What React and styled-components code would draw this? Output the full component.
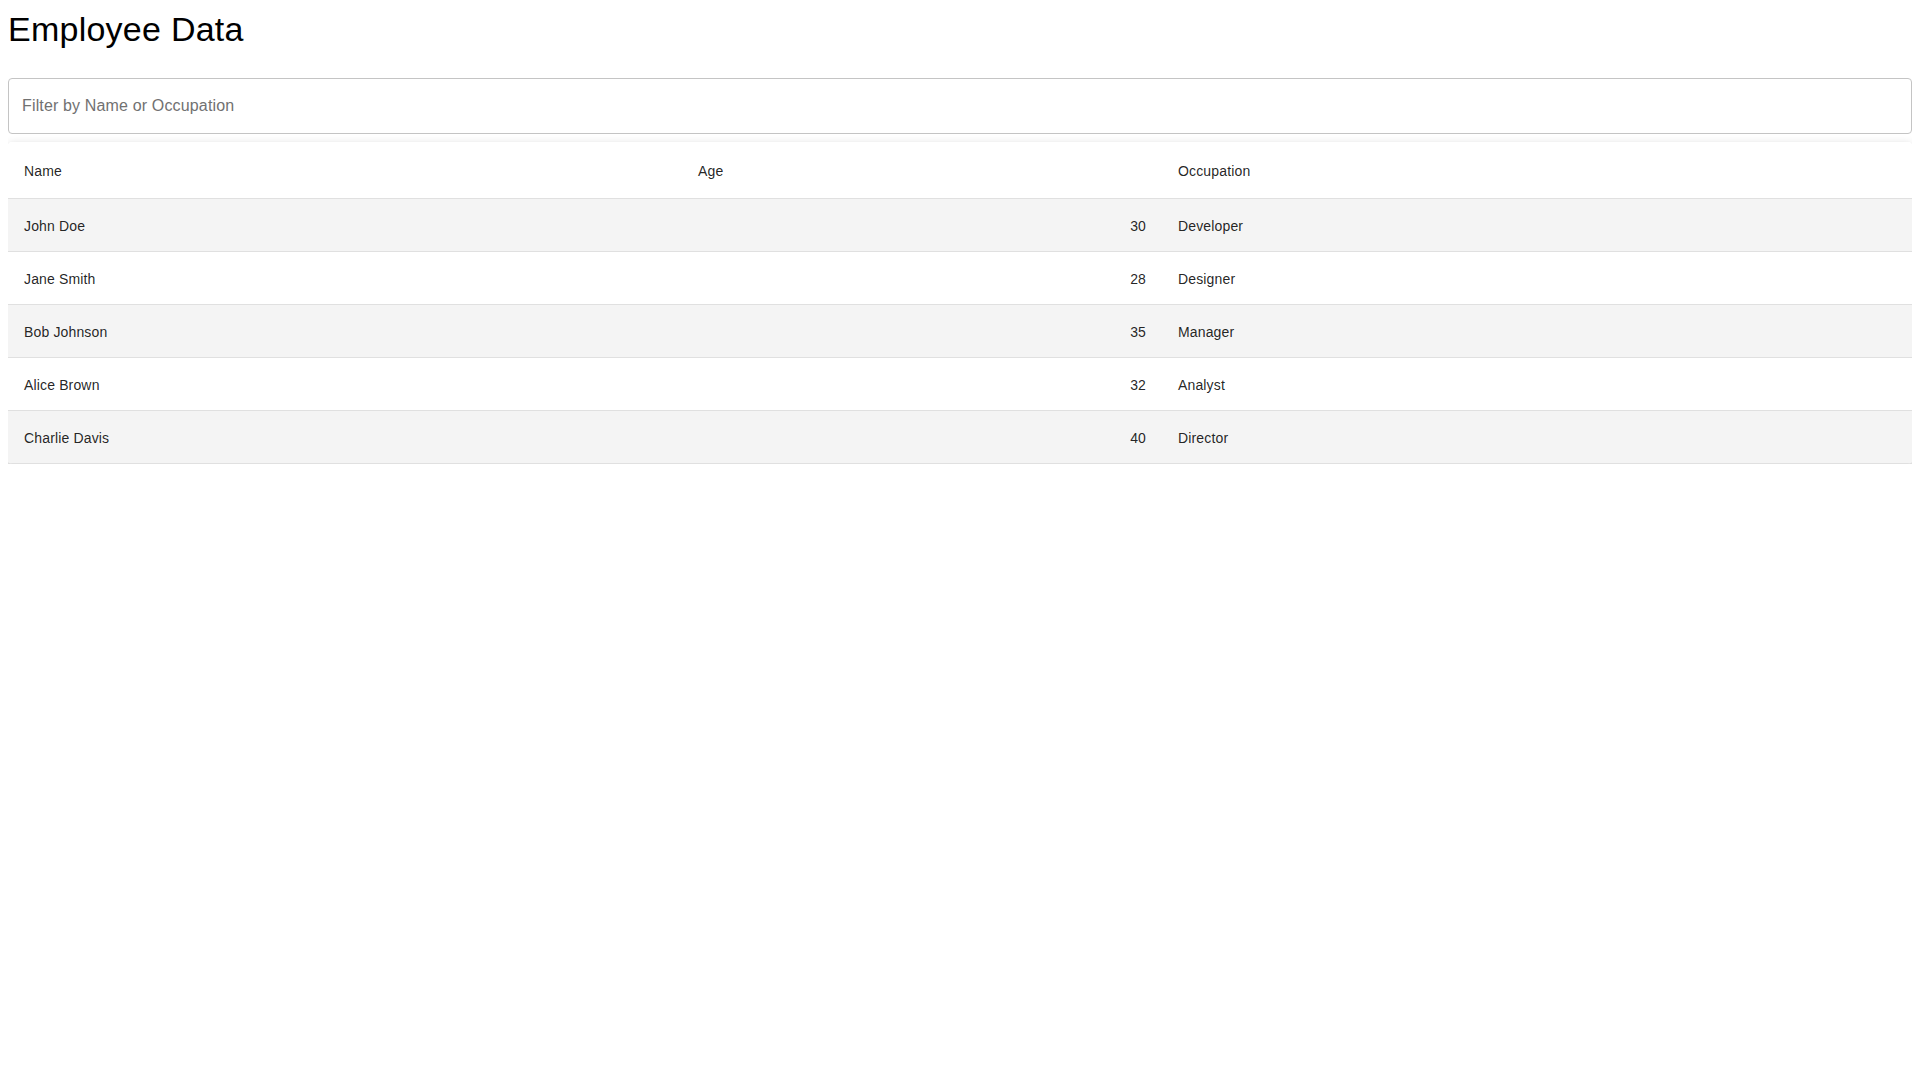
import React, { useState } from 'react';
import styled, { createGlobalStyle } from 'styled-components';

const GlobalStyle = createGlobalStyle`
    body {
        margin: 8px;
        background: #fff;
        font-family: "Liberation Sans", Arial, sans-serif;
    }
`;

const Page = styled.div`
    display: flex;
    flex-direction: column;
`;

const Title = styled.h1`
    margin: 0 0 11.9px;
    font-size: 34px;
    font-weight: 400;
    line-height: 42px;
    letter-spacing: 0.00735em;
    color: #000;
`;

const FilterInput = styled.input`
    box-sizing: border-box;
    width: 100%;
    height: 56px;
    margin: 16px 0 8px;
    padding: 0 13px;
    border: 1px solid #c4c4c4;
    border-radius: 4px;
    font-family: "Liberation Sans", Arial, sans-serif;
    font-size: 16px;
    letter-spacing: 0.00938em;
    color: rgba(0, 0, 0, 0.87);
    outline: none;

    &::placeholder {
        color: #717171;
    }
`;

const Paper = styled.div`
    background: #fff;
    border-radius: 4px;
    overflow: hidden;
    box-shadow: 0px 3px 3px -2px rgba(0, 0, 0, 0.2),
        0px 3px 4px 0px rgba(0, 0, 0, 0.14),
        0px 1px 8px 0px rgba(0, 0, 0, 0.12);
`;

const Table = styled.table`
    width: 100%;
    border-collapse: collapse;
    table-layout: fixed;
    font-family: "Liberation Sans", Arial, sans-serif;
    font-size: 14px;
    letter-spacing: 0.01071em;
    color: rgba(0, 0, 0, 0.87);
`;

const Row = styled.tr`
    background: ${props => (props.$striped ? '#f4f4f4' : '#fff')};
`;

const Cell = styled.td`
    padding: 17px 16px 15px;
    border-bottom: 1px solid #e0e0e0;
    text-align: ${props => (props.$numeric ? 'right' : 'left')};
    line-height: ${props => (props.$head ? '24px' : '20px')};
    font-weight: 400;
    vertical-align: middle;
`;

const employees = [
    { name: 'John Doe', age: 30, occupation: 'Developer' },
    { name: 'Jane Smith', age: 28, occupation: 'Designer' },
    { name: 'Bob Johnson', age: 35, occupation: 'Manager' },
    { name: 'Alice Brown', age: 32, occupation: 'Analyst' },
    { name: 'Charlie Davis', age: 40, occupation: 'Director' }
];

export default function App() {
    const [filter, setFilter] = useState('');
    const q = filter.toLowerCase();
    const rows = employees.filter(e =>
        e.name.toLowerCase().includes(q) || e.occupation.toLowerCase().includes(q)
    );

    return (
        <Page>
            <GlobalStyle />
            <Title>Employee Data</Title>
            <FilterInput
                placeholder="Filter by Name or Occupation"
                value={filter}
                onChange={e => setFilter(e.target.value)}
            />
            <Paper>
                <Table>
                    <colgroup>
                        <col style={{ width: '674px' }} />
                        <col style={{ width: '480px' }} />
                        <col />
                    </colgroup>
                    <thead>
                        <Row>
                            <Cell as="th" $head>Name</Cell>
                            <Cell as="th" $head>Age</Cell>
                            <Cell as="th" $head>Occupation</Cell>
                        </Row>
                    </thead>
                    <tbody>
                        {rows.map((e, index) => (
                            <Row key={e.name} $striped={index % 2 === 0}>
                                <Cell>{e.name}</Cell>
                                <Cell $numeric>{e.age}</Cell>
                                <Cell>{e.occupation}</Cell>
                            </Row>
                        ))}
                    </tbody>
                </Table>
            </Paper>
        </Page>
    );
}
